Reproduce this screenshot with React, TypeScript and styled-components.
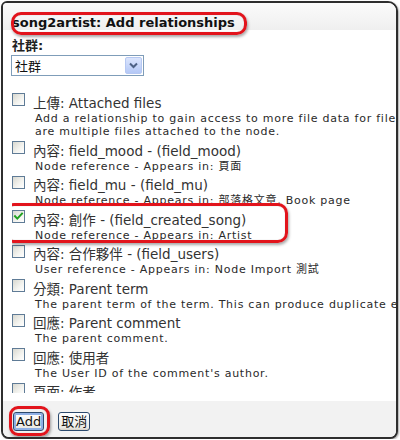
import React from "react";
import styled, { createGlobalStyle, css } from "styled-components";

const GlobalStyle = createGlobalStyle`
  html, body { margin: 0; padding: 0; background: #ffffff; }
  body { font-family: "DejaVu Sans", "Noto Sans CJK TC", sans-serif; }
  * { box-sizing: border-box; }
`;

const FONT = `"DejaVu Sans", "Noto Sans CJK TC", sans-serif`;

const ringStyle = css`
  content: "";
  position: absolute;
  border: 3px solid #e2141c;
  border-radius: 10px;
  box-shadow: 1px 2px 3px rgba(0, 0, 0, 0.35), inset 0 0 1px rgba(0, 0, 0, 0.3);
  pointer-events: none;
  z-index: 2;
`;

const Frame = styled.div`
  margin: 1px 0 0 1px;
  width: 397px;
  height: 438px;
  border: 2px solid #2e2e2e;
  border-radius: 6px 10px 8px 8px;
  box-shadow: 1px 1px 2px rgba(0, 0, 0, 0.35);
  display: flex;
  flex-direction: column;
  overflow: hidden;
  background: #ffffff;
  font-family: ${FONT};
  color: #2a2a2a;
`;

const Header = styled.div`
  height: 27px;
  flex: none;
  padding: 9px 0 0 9px;
  background: linear-gradient(#fbfbfb, #efefef);
`;

const Title = styled.h1`
  position: relative;
  display: inline-block;
  margin: 0;
  font-size: 13px;
  line-height: 16px;
  font-weight: bold;
  color: #111;
  white-space: nowrap;
  &::after {
    ${ringStyle}
    top: -3px;
    left: -1px;
    right: -12px;
    bottom: -4px;
  }
`;

const Body = styled.div`
  flex: 1;
  display: flex;
  flex-direction: column;
  padding: 0 0 0 9px;
  background: #ffffff;
  min-height: 0;
`;

const FieldLabel = styled.label`
  margin-top: 7px;
  font-size: 13px;
  line-height: 17px;
  font-weight: bold;
  color: #222;
`;

const Select = styled.div`
  margin-top: 1px;
  margin-left: -1px;
  width: 133px;
  height: 21px;
  border: 1px solid #7f9db9;
  background: #fff;
  display: flex;
  align-items: center;
  justify-content: space-between;
  padding: 0 1px 0 3px;
  font-size: 13px;
  color: #111;
`;

const SelectArrow = styled.span`
  width: 17px;
  height: 17px;
  border: 1px solid #b6c8f2;
  border-radius: 2px;
  background: linear-gradient(#dbe5fd, #b4c8f6);
  display: flex;
  align-items: center;
  justify-content: center;
`;

const List = styled.div`
  margin-top: 10px;
  height: 307px;
  flex: none;
  overflow: hidden;
  padding-top: 8.5px;
`;

const Item = styled.div<{ $highlight?: boolean }>`
  position: relative;
  display: flex;
  align-items: flex-start;
  margin-bottom: 4px;
  ${(p) =>
    p.$highlight &&
    css`
      &::after {
        ${ringStyle}
        top: -8.5px;
        left: -8px;
        width: 278px;
        bottom: -0.5px;
      }
    `}
`;

const Check = styled.span<{ $checked?: boolean }>`
  flex: none;
  width: 13px;
  height: 13px;
  margin-top: -1.5px;
  border: 1px solid #5f7b96;
  background: linear-gradient(135deg, #d8d8d0 0%, #f4f4f0 60%, #ffffff 100%);
  display: flex;
  align-items: center;
  justify-content: center;
`;

const ItemText = styled.div`
  margin-left: 8px;
  white-space: nowrap;
`;

const ItemTitle = styled.div`
  font-size: 13.5px;
  line-height: 17px;
  color: #333;
`;

const ItemDesc = styled.div`
  padding-left: 2px;
  font-size: 11px;
  line-height: 13.5px;
  letter-spacing: 0.75px;
  color: #2a2a2a;
`;

const Footer = styled.div`
  height: 36px;
  flex: none;
  background: #f2f2f2;
  display: flex;
  align-items: flex-start;
  padding: 11px 0 0 10px;
  gap: 14px;
`;

const Button = styled.button<{ $primary?: boolean }>`
  position: relative;
  height: 19px;
  padding: 0 2px;
  font-family: ${FONT};
  font-size: 13px;
  line-height: 15px;
  color: #111;
  border: 1px solid #2c4a6e;
  border-radius: 3px;
  background: linear-gradient(#ffffff, #ecebe6 85%, #d6d0c5);
  ${(p) =>
    p.$primary &&
    css`
      box-shadow: inset 0 0 0 2px #8fb0e6;
      &::after {
        ${ringStyle}
        top: -7px;
        left: -5px;
        right: -7px;
        bottom: -6px;
        border-radius: 9px;
      }
    `}
`;

type Entry = { title: string; desc: string[]; checked?: boolean };

const entries: Entry[] = [
  {
    title: "上傳: Attached files",
    desc: [
      "Add a relationship to gain access to more file data for files. If there",
      "are multiple files attached to the node.",
    ],
  },
  { title: "內容: field_mood - (field_mood)", desc: ["Node reference - Appears in: 頁面"] },
  { title: "內容: field_mu - (field_mu)", desc: ["Node reference - Appears in: 部落格文章, Book page"] },
  { title: "內容: 創作 - (field_created_song)", desc: ["Node reference - Appears in: Artist"], checked: true },
  { title: "內容: 合作夥伴 - (field_users)", desc: ["User reference - Appears in: Node Import 測試"] },
  { title: "分類: Parent term", desc: ["The parent term of the term. This can produce duplicate entries"] },
  { title: "回應: Parent comment", desc: ["The parent comment."] },
  { title: "回應: 使用者", desc: ["The User ID of the comment's author."] },
  { title: "頁面: 作者", desc: ["The author of the node."] },
];

const CheckMark = () => (
  <svg width="11" height="11" viewBox="0 0 11 11">
    <path d="M2 5.2 L4.3 7.6 L9 2.6" fill="none" stroke="#21a121" strokeWidth="2" strokeLinecap="square" />
  </svg>
);

const Chevron = () => (
  <svg width="9" height="7" viewBox="0 0 9 7">
    <path d="M1 1.5 L4.5 5 L8 1.5" fill="none" stroke="#4d6185" strokeWidth="2" />
  </svg>
);

export default function App() {
  return (
    <>
      <GlobalStyle />
      <Frame>
        <Header>
          <Title>song2artist: Add relationships</Title>
        </Header>
        <Body>
          <FieldLabel>社群:</FieldLabel>
          <Select>
            <span>社群</span>
            <SelectArrow>
              <Chevron />
            </SelectArrow>
          </Select>
          <List>
            {entries.map((e) => (
              <Item key={e.title} $highlight={e.checked}>
                <Check $checked={e.checked}>{e.checked && <CheckMark />}</Check>
                <ItemText>
                  <ItemTitle>{e.title}</ItemTitle>
                  {e.desc.map((d) => (
                    <ItemDesc key={d}>{d}</ItemDesc>
                  ))}
                </ItemText>
              </Item>
            ))}
          </List>
        </Body>
        <Footer>
          <Button $primary>Add</Button>
          <Button>取消</Button>
        </Footer>
      </Frame>
    </>
  );
}
